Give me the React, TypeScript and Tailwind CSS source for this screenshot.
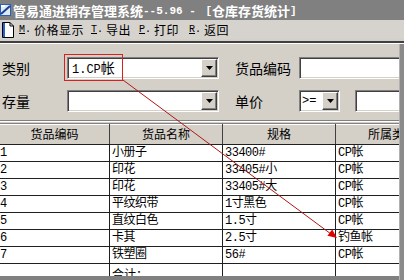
import React from "react";

const rows: string[][] = [
  ["1", "小册子", "33400#", "CP帐"],
  ["2", "印花", "33405#小", "CP帐"],
  ["3", "印花", "33405#大", "CP帐"],
  ["4", "平纹织带", "1寸黑色", "CP帐"],
  ["5", "直纹白色", "1.5寸", "CP帐"],
  ["6", "卡其", "2.5寸", "钓鱼帐"],
  ["7", "铁塑圈", "56#", "CP帐"],
];

function DropBtn() {
  return (
    <div className="w-[16px] h-[18px] shrink-0 bg-[#d4d0c8] border border-t-white border-l-white border-b-[#404040] border-r-[#404040] shadow-[inset_-1px_-1px_0_#808080] flex items-center justify-center">
      <svg width="7" height="4" viewBox="0 0 7 4">
        <path d="M0 0H7L3.5 4Z" fill="#000" />
      </svg>
    </div>
  );
}

function Sunken({ className, children }: { className?: string; children?: React.ReactNode }) {
  return (
    <div
      className={
        "h-[22px] shrink-0 bg-white border border-t-[#808080] border-l-[#808080] border-b-white border-r-white shadow-[inset_1px_1px_0_#404040,inset_-1px_-1px_0_#d4d0c8] flex items-center p-[1px] " +
        (className || "")
      }
    >
      {children}
    </div>
  );
}

function MenuItem({ k, label, w }: { k: string; label: string; w: string }) {
  return (
    <span className={"flex items-center text-[12px] leading-[14px] text-black shrink-0 " + w}>
      <span className="underline text-[10px] font-['Liberation_Mono',monospace]">{k}</span>
      <span className="text-[10px] font-['Liberation_Mono',monospace] mr-[3px]">.</span>
      <span className="tracking-[0.5px]">{label}</span>
    </span>
  );
}

export default function App() {
  const cols = "grid grid-cols-[110px_113px_113px_113px]";
  return (
    <div className="w-[404px] h-[280px] overflow-hidden bg-[#d4d0c8] font-['Noto_Sans_CJK_SC',sans-serif] flex flex-col">
      {/* title bar */}
      <div className="h-[20px] bg-[#808080] flex items-center shrink-0">
        <svg width="12" height="14" viewBox="0 0 12 14" className="mr-[1px] shrink-0">
          <rect x="0" y="1" width="11" height="12" fill="#2a5fb8" />
          <rect x="1" y="2" width="9" height="10" fill="#dfe8f5" />
          <path d="M1 11L10 3" stroke="#1a3f90" strokeWidth="2" />
          <rect x="1" y="2" width="4" height="2" fill="#ffffff" />
        </svg>
        <span className="text-white font-bold text-[13px] leading-[16px] pt-[2px] whitespace-nowrap flex items-center">
          <span>管易通进销存管理系统</span>
          <span className="font-['Liberation_Mono',monospace] text-[11px] whitespace-pre">--5.96 - </span>
          <span className="font-['Liberation_Mono',monospace] text-[11px] ml-[3px]">[</span>
          <span>仓库存货统计</span>
          <span className="font-['Liberation_Mono',monospace] text-[11px]">]</span>
        </span>
      </div>

      {/* menu bar */}
      <div className="h-[19px] flex items-center shrink-0 bg-[#d6d3ce]">
        <svg width="12" height="16" viewBox="0 0 12 16" className="ml-[2px] mr-[5px] mt-[1px] shrink-0">
          <path d="M0.5 0.5H8L11.5 4V15.5H0.5Z" fill="#fff" stroke="#000" />
          <path d="M8 0.5V4H11.5" fill="none" stroke="#000" />
          <rect x="1" y="1" width="2" height="14" fill="#2f5fd0" />
        </svg>
        <MenuItem k="M" label="价格显示" w="w-[72px]" />
        <MenuItem k="T" label="导出" w="w-[48px]" />
        <MenuItem k="P" label="打印" w="w-[50px]" />
        <MenuItem k="R" label="返回" w="w-[50px]" />
      </div>

      {/* separator */}
      <div className="h-[2px] shrink-0" />
      <div className="h-[2px] bg-[#404040] shrink-0" />
      <div className="h-[1px] bg-white shrink-0" />

      <div className="flex flex-1 min-h-0">
        <div className="w-[399px] shrink-0 overflow-hidden flex flex-col">
          {/* form */}
          <div className="pt-[13px] flex flex-col gap-[11px] text-[14px] leading-[16px] text-black">
            <div className="flex items-center h-[22px]">
              <span className="w-[67px] shrink-0 pl-[2px]">类别</span>
              <Sunken className="w-[152px]">
                <span className="flex-1 pl-[3px] text-[12px] font-['Liberation_Mono','Noto_Sans_CJK_SC',monospace] leading-[16px] whitespace-nowrap">
                  1.CP<span className="text-[14px] font-['Noto_Sans_CJK_SC',sans-serif]">帐</span>
                </span>
                <DropBtn />
              </Sunken>
              <span className="w-[64px] shrink-0 ml-[16px]">货品编码</span>
              <Sunken className="w-[110px]" />
            </div>
            <div className="flex items-center h-[22px]">
              <span className="w-[67px] shrink-0 pl-[2px]">存量</span>
              <Sunken className="w-[152px]">
                <span className="flex-1" />
                <DropBtn />
              </Sunken>
              <span className="w-[64px] shrink-0 ml-[16px]">单价</span>
              <Sunken className="w-[41px]">
                <span className="flex-1 pl-[1px] text-[12px] font-['Liberation_Mono',monospace] leading-[14px]">&gt;=</span>
                <DropBtn />
              </Sunken>
              <Sunken className="w-[60px] ml-[15px]" />
            </div>
          </div>

          {/* separator */}
          <div className="mt-[8px] h-[1px] bg-[#808080] shrink-0" />
          <div className="h-[1px] bg-white shrink-0" />
          <div className="h-[1px] shrink-0" />

          {/* grid */}
          <div className="flex flex-col w-[449px] text-[12px] text-black">
            <div className={cols + " h-[22px] border-t border-[#808080] border-b border-b-[#202020] bg-[#d4d0c8] shadow-[inset_0_1px_0_#ffffff]"}>
              {["货品编码", "货品名称", "规格", "所属类别"].map((h) => (
                <div key={h} className="border-r border-r-[#404040] flex items-center justify-center leading-[14px]">
                  {h}
                </div>
              ))}
            </div>
            {rows.map((r, i) => (
              <div key={i} className={cols + " h-[17px] bg-white border-b border-[#202020]"}>
                {r.map((c, j) => (
                  <div
                    key={j}
                    className={
                      "border-r border-[#202020] flex items-center leading-[14px] whitespace-nowrap overflow-hidden font-['Liberation_Mono','Noto_Sans_CJK_SC',monospace] tracking-[-0.5px] " +
                      (j === 0 ? "pl-0" : "pl-[2px]")
                    }
                  >
                    {c}
                  </div>
                ))}
              </div>
            ))}
            <div className={cols + " h-[12px] bg-white overflow-hidden"}>
              <div className="border-r border-[#202020]" />
              <div className="border-r border-[#202020] pl-[2px] pt-[3px] leading-[14px] whitespace-nowrap">合计：</div>
              <div className="border-r border-[#202020]" />
              <div className="border-r border-[#202020]" />
            </div>
            <div className="h-[6px] bg-[#808080]" />
          </div>
        </div>
        <div className="w-[5px] shrink-0 bg-[#8a8a8a] border-l border-[#b0b0b0]" />
      </div>

      {/* red annotation */}
      <svg className="absolute left-0 top-0 pointer-events-none" width="404" height="280" viewBox="0 0 404 280">
        <rect x="64.5" y="54.5" width="58" height="26" fill="none" stroke="#d82020" strokeWidth="1" />
        <line x1="123" y1="80" x2="331" y2="234" stroke="#b01818" strokeWidth="1" />
        <path d="M337 238L327.4 235.8L332.2 229.4Z" fill="#e00000" />
      </svg>
    </div>
  );
}
